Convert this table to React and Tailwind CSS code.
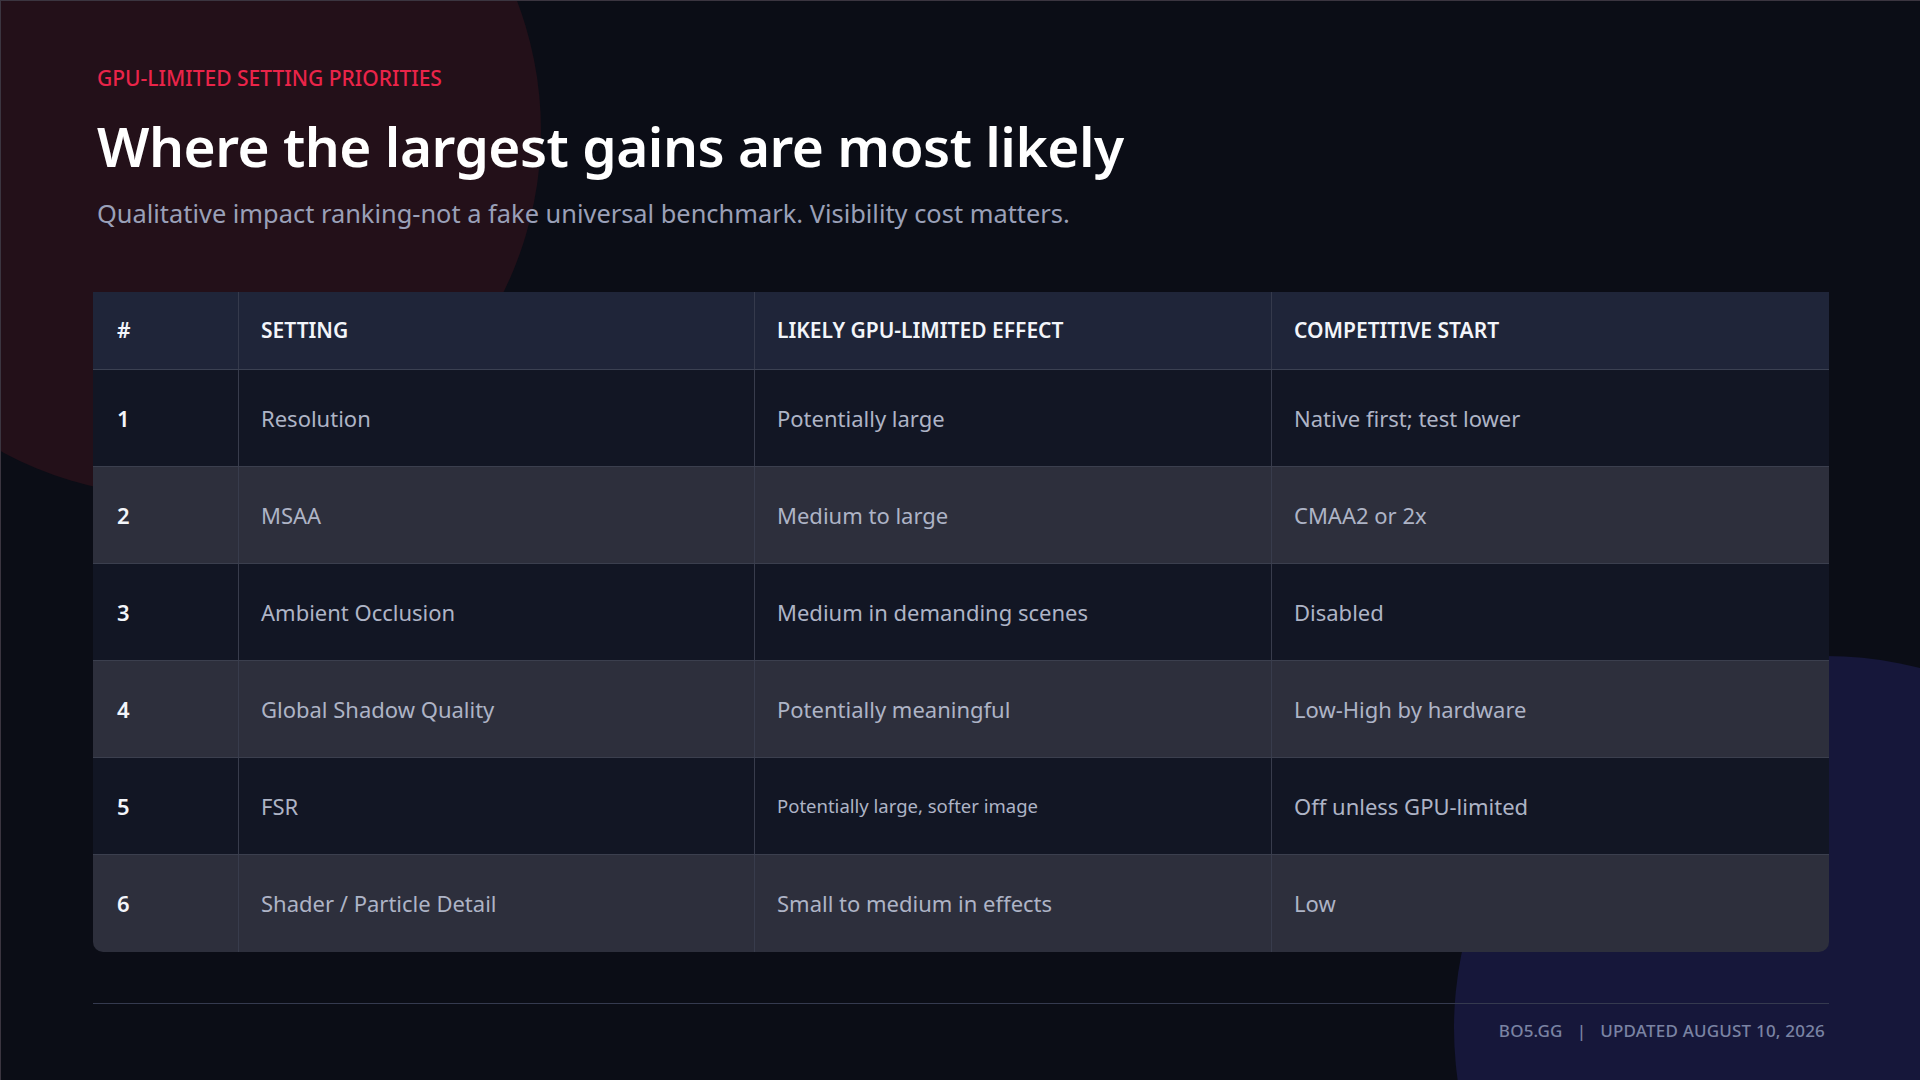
const rows = [
  { n: "1", setting: "Resolution", effect: "Potentially large", start: "Native first; test lower" },
  { n: "2", setting: "MSAA", effect: "Medium to large", start: "CMAA2 or 2x" },
  { n: "3", setting: "Ambient Occlusion", effect: "Medium in demanding scenes", start: "Disabled" },
  { n: "4", setting: "Global Shadow Quality", effect: "Potentially meaningful", start: "Low-High by hardware" },
  { n: "5", setting: "FSR", effect: "Potentially large, softer image", start: "Off unless GPU-limited", small: true },
  { n: "6", setting: "Shader / Particle Detail", effect: "Small to medium in effects", start: "Low" },
];

const font = { fontFamily: '"Noto Sans", "Open Sans", sans-serif' };

export default function App() {
  return (
    <div
      className="relative w-full h-[1080px] overflow-hidden bg-[#0b0d16] border-t border-l border-[#3b3540]"
      style={font}
    >
      {/* background blobs */}
      <div className="absolute left-[-190px] top-[-235px] w-[730px] h-[730px] rounded-full bg-[#231019]" />
      <div className="absolute left-[1453px] top-[655px] w-[744px] h-[744px] rounded-full bg-[#16173a]" />

      <div className="relative px-[92px] pt-[62px]">
        <div className="ml-[4px] text-[21px] leading-[30px] font-medium text-[#ea2449]">
          GPU-LIMITED SETTING PRIORITIES
        </div>
        <h1 className="ml-[4px] mt-[20px] text-[55px] leading-[66px] font-semibold text-white tracking-[-0.5px]">
          Where the largest gains are most likely
        </h1>
        <p className="ml-[4px] mt-[16px] text-[25.4px] leading-[36px] text-[#9aa0b8]">
          Qualitative impact ranking-not a fake universal benchmark. Visibility cost matters.
        </p>

        <div className="mt-[61px] w-[1736px] rounded-b-[10px] overflow-hidden">
          <div className="grid grid-cols-[145px_516px_517px_558px] h-[78px] bg-[#1f2539] border-b border-[#3b4152] text-[21px] font-semibold text-[#f3f5fa]">
            <div className="flex items-center px-[24px]">#</div>
            <div className="flex items-center px-[22px] border-l border-[#353a4c]">SETTING</div>
            <div className="flex items-center px-[22px] border-l border-[#353a4c]">LIKELY GPU-LIMITED EFFECT</div>
            <div className="flex items-center px-[22px] border-l border-[#353a4c]">COMPETITIVE START</div>
          </div>
          {rows.map((r, i) => (
            <div
              key={r.n}
              className={`grid grid-cols-[145px_516px_517px_558px] h-[97px] text-[22px] ${
                i % 2 === 0 ? "bg-[#121624]" : "bg-[#2d2f3c]"
              } ${i < rows.length - 1 ? "border-b border-[#3b3f4e]" : ""}`}
            >
              <div className="flex items-center px-[24px] font-semibold text-[#f3f5fa]">{r.n}</div>
              <div className="flex items-center px-[22px] border-l border-[#383c4c] text-[#aeb4c6]">{r.setting}</div>
              <div
                className={`flex items-center px-[22px] border-l border-[#383c4c] text-[#aeb4c6] ${
                  r.small ? "text-[18.5px]" : ""
                }`}
              >
                {r.effect}
              </div>
              <div className="flex items-center px-[22px] border-l border-[#383c4c] text-[#aeb4c6]">{r.start}</div>
            </div>
          ))}
        </div>

        <div className="mt-[51px] w-[1736px] border-t border-[#353a4f]" />
        <div className="w-[1736px] flex justify-end pr-[4px] pt-[14px] text-[17px] font-medium text-[#7a83a3] tracking-[0.2px]">
          <span>BO5.GG</span>
          <span className="mx-[14px]">|</span>
          <span>UPDATED AUGUST 10, 2026</span>
        </div>
      </div>
    </div>
  );
}
